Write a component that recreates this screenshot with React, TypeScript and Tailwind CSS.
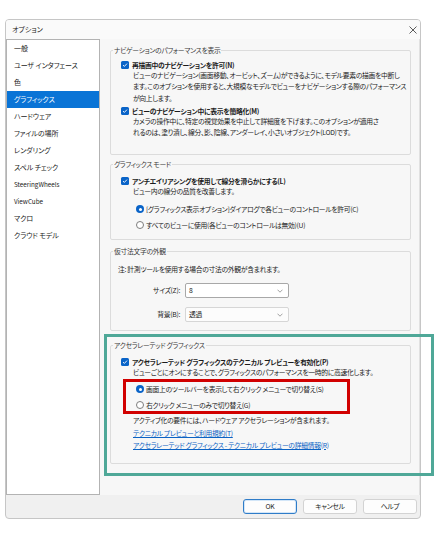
import React from "react";

const font = "font-['Noto_Sans_CJK_JP','Noto_Sans',sans-serif] [font-feature-settings:'palt']";

const navItems = [
  "一般",
  "ユーザ インタフェース",
  "色",
  "グラフィックス",
  "ハードウェア",
  "ファイルの場所",
  "レンダリング",
  "スペル チェック",
  "SteeringWheels",
  "ViewCube",
  "マクロ",
  "クラウド モデル",
];

function CheckBox() {
  return (
    <span className="flex h-[8px] w-[8px] shrink-0 items-center justify-center rounded-[1.5px] bg-[#0a64c8]">
      <svg width="6" height="6" viewBox="0 0 6 6">
        <path d="M1 3.1 L2.4 4.4 L5 1.6" fill="none" stroke="white" strokeWidth="0.9" />
      </svg>
    </span>
  );
}

function Radio({ on }: { on?: boolean }) {
  if (on) {
    return (
      <span className="flex h-[8px] w-[8px] shrink-0 items-center justify-center rounded-full bg-[#0a64c8]">
        <span className="h-[3px] w-[3px] rounded-full bg-white" />
      </span>
    );
  }
  return <span className="h-[8px] w-[8px] shrink-0 rounded-full border border-[#7d7d7d] bg-white" />;
}

function CheckRow({ label, className = "" }: { label: string; className?: string }) {
  return (
    <div className={`flex h-[10px] items-center gap-[3px] pl-[10px] ${className}`}>
      <CheckBox />
      <span className="whitespace-nowrap font-bold leading-[10px]">{label}</span>
    </div>
  );
}

function Desc({ lines, className = "" }: { lines: string[]; className?: string }) {
  return (
    <div className={`pl-[22px] leading-[11.3px] ${className}`}>
      {lines.map((l) => (
        <div key={l} className="whitespace-nowrap">
          {l}
        </div>
      ))}
    </div>
  );
}

function RadioRow({ on, label, className = "" }: { on?: boolean; label: string; className?: string }) {
  return (
    <div className={`flex items-center gap-[2px] ${className}`}>
      <Radio on={on} />
      <span className="whitespace-nowrap">{label}</span>
    </div>
  );
}

function Group({ title, className, children }: { title: string; className: string; children: React.ReactNode }) {
  return (
    <fieldset className={`ml-[10px] w-[301px] rounded-[2px] border border-[#dcdcdc] ${className}`}>
      <legend className="ml-[2px] px-[1px] leading-[12px] text-[#3a3a3a]">{title}</legend>
      {children}
    </fieldset>
  );
}

function Select({ value, strong }: { value: string; strong?: boolean }) {
  return (
    <div
      className={`flex h-[15px] w-[104px] items-center justify-between rounded-[2px] border pl-[3px] pr-[5px] ${
        strong ? "border-[#a8a8a8] bg-white" : "border-[#d6d6d6] bg-[#fcfcfc]"
      }`}
    >
      <span>{value}</span>
      <svg width="6" height="4" viewBox="0 0 6 4">
        <path d="M0.5 0.7 L3 3.2 L5.5 0.7" fill="none" stroke="#8a8a8a" strokeWidth="0.8" />
      </svg>
    </div>
  );
}

function Button({ label, primary }: { label: string; primary?: boolean }) {
  return (
    <div
      className={`flex h-[15px] w-[54px] items-center justify-center rounded-[3px] bg-[#fdfdfd] ${
        primary ? "border border-[#2f7cc8] shadow-[inset_0_0_0_1px_#d3e6f8]" : "border border-[#d3d3d3]"
      }`}
    >
      {label}
    </div>
  );
}

export default function App() {
  return (
    <div className={`relative h-[536px] w-[437px] bg-white text-[6.8px] tracking-[-0.3px] text-[#1b1b1b] ${font}`}>
      <div className="pt-[19px] pl-[5px]">
        <div className="flex h-[500px] w-[416px] flex-col overflow-hidden rounded-[4px] border border-[#c6c6c6] bg-[#f0f0f0]">
          {/* title */}
          <div className="flex h-[19px] shrink-0 items-center justify-between bg-[#fafafa] pl-[6px] pr-[3px]">
            <span className="text-[7px] tracking-normal">オプション</span>
            <svg width="8" height="8" viewBox="0 0 8 8">
              <path d="M0.5 0.5 L7.5 7.5 M7.5 0.5 L0.5 7.5" stroke="#333" strokeWidth="0.8" />
            </svg>
          </div>

          <div className="flex h-[456px] shrink-0">
            {/* nav */}
            <div className="h-full w-[94px] shrink-0 overflow-hidden border border-[#b3b3b3] bg-white text-[7px] tracking-[-0.1px]">
              {navItems.map((item) => {
                const sel = item === "グラフィックス";
                const latin = item === "SteeringWheels" || item === "ViewCube";
                return (
                  <div
                    key={item}
                    className={`flex h-[17px] items-center whitespace-nowrap pl-[7px] ${
                      sel ? "bg-[#0a74d6] text-white" : ""
                    } ${latin ? "text-[6.3px] tracking-normal" : ""}`}
                  >
                    {item}
                  </div>
                );
              })}
            </div>

            {/* content */}
            <div className="h-full min-w-0 flex-1 overflow-hidden border-r border-[#e1e1e1] bg-[#f7f7f7]">
              <Group title="ナビゲーションのパフォーマンスを表示" className="mt-[5px] h-[111px]">
                <CheckRow label="再描画中のナビゲーションを許可(N)" className="mt-[4px]" />
                <Desc
                  lines={[
                    "ビューのナビゲーション(画面移動、オービット、ズーム)ができるように、モデル要素の描画を中断し",
                    "ます。このオプションを使用すると、大規模なモデルでビューをナビゲーションする際のパフォーマンス",
                    "が向上します。",
                  ]}
                />
                <CheckRow label="ビューのナビゲーション中に表示を簡略化(M)" className="mt-[2px]" />
                <Desc
                  lines={[
                    "カメラの操作中に、特定の視覚効果を中止して詳細度を下げます。このオプションが適用さ",
                    "れるのは、塗り潰し、線分、影、陰線、アンダーレイ、小さいオブジェクト(LOD)です。",
                  ]}
                />
              </Group>

              <Group title="グラフィックス モード" className="mt-[3px] h-[82px]">
                <CheckRow label="アンチエイリアシングを使用して線分を滑らかにする(L)" className="mt-[6px]" />
                <Desc lines={["ビュー内の線分の品質を改善します。"]} />
                <RadioRow on label="[グラフィックス表示オプション]ダイアログで各ビューのコントロールを許可(C)" className="mt-[4px] h-[16px] pl-[25px]" />
                <RadioRow label="すべてのビューに使用(各ビューのコントロールは無効)(U)" className="h-[16px] pl-[25px]" />
              </Group>

              <Group title="仮寸法文字の外観" className="mt-[5px] h-[86px]">
                <div className="mt-[6px] pl-[7px] leading-[12px]">注: 計測ツールを使用する場合の寸法の外観が含まれます。</div>
                <div className="mt-[8px] flex items-center gap-[5px]">
                  <span className="w-[69px] text-right">サイズ(Z):</span>
                  <Select value="8" strong />
                </div>
                <div className="mt-[9px] flex items-center gap-[5px]">
                  <span className="w-[69px] text-right">背景(B):</span>
                  <Select value="透過" />
                </div>
              </Group>

              <Group title="アクセラレーテッド グラフィックス" className="mt-[8px] h-[125px]">
                <CheckRow label="アクセラレーテッド グラフィックスのテクニカル プレビューを有効化(P)" className="mt-[6px]" />
                <Desc lines={["ビューごとにオンにすることで、グラフィックスのパフォーマンスを一時的に高速化します。"]} />
                <div className="ml-[12px] mt-[1px] flex w-[227px] flex-col gap-[4px] border-[3px] border-[#d10000] pl-[10px] pt-[1px]">
                  <RadioRow on label="画面上のツールバーを表示して右クリック メニューで切り替え(S)" className="h-[12px]" />
                  <RadioRow label="右クリック メニューのみで切り替え(G)" className="h-[12px]" />
                </div>
                <Desc className="mt-[1px]" lines={["アクティブ化の要件には、ハードウェア アクセラレーションが含まれます。"]} />
                <div className="mt-[1.7px] pl-[22px] leading-[11.3px] text-[#0b62c4]">
                  <div className="whitespace-nowrap underline">テクニカル プレビューと利用規約(T)</div>
                  <div className="whitespace-nowrap underline">アクセラレーテッド グラフィックス - テクニカル プレビューの詳細情報(R)</div>
                </div>
              </Group>
            </div>
          </div>

          {/* buttons */}
          <div className="flex flex-1 items-start justify-end gap-[6px] pr-[3px] pt-[4px] text-[6.8px]">
            <Button label="OK" primary />
            <Button label="キャンセル" />
            <Button label="ヘルプ" />
          </div>
        </div>
      </div>

      {/* highlight annotation */}
      <div className="pointer-events-none absolute left-[104px] top-[334px] h-[142px] w-[330px] border-[3px] border-[#4fa898]" />
    </div>
  );
}
